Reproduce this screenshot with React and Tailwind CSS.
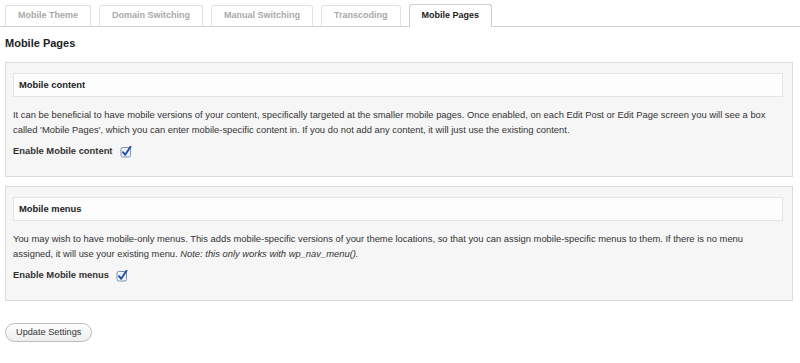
import React from 'react';

const tabs = ['Mobile Theme', 'Domain Switching', 'Manual Switching', 'Transcoding', 'Mobile Pages'];

const CheckBox = () => (
  <svg width="12" height="12" viewBox="0 0 12 12" className="ml-[7px] shrink-0">
    <rect x="1" y="1.5" width="9.5" height="9.5" rx="1.5" fill="#eef3fb" stroke="#7f93b3" strokeWidth="1" />
    <path d="M3 6.2 L5.2 8.8 L10.5 0.8" fill="none" stroke="#1f4f9e" strokeWidth="1.9" strokeLinecap="round" strokeLinejoin="round" />
  </svg>
);

const Section = ({ title, label, children }) => (
  <div className="border border-[#dcdcdc] bg-[#f6f6f6] pl-[7px] pr-[9px] pt-[10px] pb-[17px]">
    <div className="h-[24px] flex items-center border border-[#e4e4e4] bg-[#fdfdfd] px-[5px] font-bold text-[#222]">
      {title}
    </div>
    <p className="mt-[10px] leading-[15px] text-[#333]">{children}</p>
    <div className="mt-[7px] flex items-center h-[15px] font-bold text-[#333]">
      {label}
      <CheckBox />
    </div>
  </div>
);

export default function App() {
  return (
    <div className="w-[800px] h-[363px] bg-white font-['Liberation_Sans',Arial,sans-serif] text-[9.4px] overflow-hidden">
      {/* Tabs */}
      <div className="flex items-end gap-[8px] pl-[5px] pt-[4px] border-b border-[#cfcfcf] h-[27px]">
        {tabs.map((t) => {
          const active = t === 'Mobile Pages';
          return (
            <div
              key={t}
              className={
                active
                  ? 'h-[23px] -mb-px px-[12px] flex items-center rounded-t-[3px] border border-b-0 border-[#cfcfcf] bg-white text-[9px] font-bold text-[#222]'
                  : 'h-[21px] px-[12px] flex items-center rounded-t-[3px] border border-b-0 border-[#e2e2e2] bg-white text-[9px] font-bold text-[#a9a9a9]'
              }
            >
              {t}
            </div>
          );
        })}
      </div>

      <div className="pl-[5px] pr-[7px]">
        <h2 className="mt-[9px] text-[11px] font-bold text-[#222] leading-[14px]">Mobile Pages</h2>

        <div className="mt-[12px] flex flex-col gap-[9px]">
          <Section title="Mobile content" label="Enable Mobile content">
            It can be beneficial to have mobile versions of your content, specifically targeted at the smaller mobile pages. Once enabled, on each Edit Post or Edit Page screen you will see a box called 'Mobile Pages', which you can enter mobile-specific content in. If you do not add any content, it will just use the existing content.
          </Section>
          <Section title="Mobile menus" label="Enable Mobile menus">
            You may wish to have mobile-only menus. This adds mobile-specific versions of your theme locations, so that you can assign mobile-specific menus to them. If there is no menu assigned, it will use your existing menu. <em className="pr-px">Note: this only works with wp_nav_menu().</em>
          </Section>
        </div>

        <button className="mt-[22px] h-[19px] px-[10px] rounded-full border border-[#bdbdbd] bg-gradient-to-b from-white to-[#ededed] text-[#333] text-[9.2px] leading-none">
          Update Settings
        </button>
      </div>
    </div>
  );
}
